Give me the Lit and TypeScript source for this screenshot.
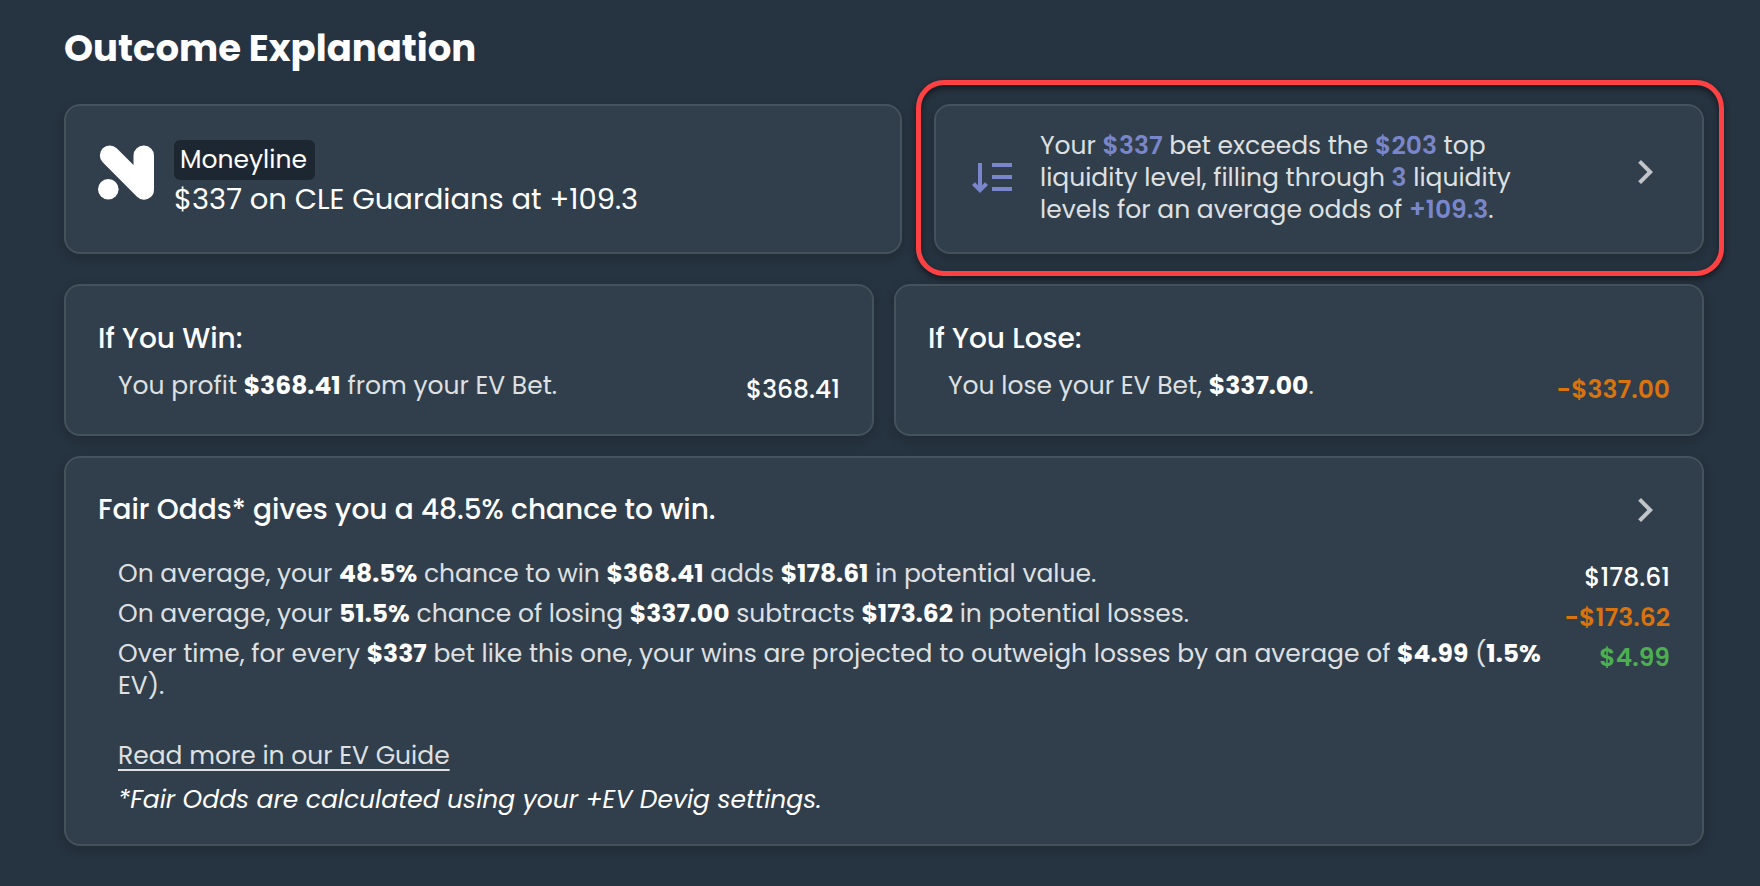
import { LitElement, html, css } from "lit";
import { customElement, property } from "lit/decorators.js";

const chevron = html`<svg class="chevron" viewBox="0 0 24 24" aria-hidden="true">
  <path d="M10 6 8.59 7.41 13.17 12l-4.58 4.59L10 18l6-6z" />
</svg>`;

const sortIcon = html`<svg class="sort" viewBox="0 0 40 30" aria-hidden="true">
  <path d="M6 0h4v22.2l3-3L16 22 8 30 0 22l3-2.800 3 3z" />
  <path d="M20 0h20v4H20zM20 12h20v4H20zM20 24h20v4H20z" />
</svg>`;

const logo = html`<svg class="logo" viewBox="0 0 56 56" role="img" aria-label="Novig">
  <path d="M46 1.500a10 10 0 0 1 10 10v34a10 10 0 0 1-17 7.200L4.700 18.300A9.900 9.900 0 0 1 18.700 4.300L35.500 21V11.500a10.200 10.200 0 0 1 10.500-10z" />
  <circle cx="10.300" cy="45.300" r="10.300" />
</svg>`;

@customElement("outcome-card")
export class OutcomeCard extends LitElement {
  static styles = css`
    :host {
      display: block;
      box-sizing: border-box;
      background: #313e4b;
      border: 2px solid #44525d;
      border-radius: 16px;
      box-shadow: 0 4px 12px rgba(0, 0, 0, 0.16);
    }
  `;
  render() {
    return html`<slot></slot>`;
  }
}

@customElement("value-row")
export class ValueRow extends LitElement {
  @property() amount = "";
  @property({ reflect: true }) tone = "plain";
  static styles = css`
    :host {
      display: flex;
      align-items: flex-start;
      gap: 24px;
      padding-left: 20px;
      color: #dee0e2;
    }
    .text {
      flex: 1;
      min-width: 0;
      line-height: 32px;
    }
    .amount {
      line-height: 40px;
      font-weight: 500;
      color: #fff;
      white-space: nowrap;
    }
    :host([tone="loss"]) .amount {
      color: #d9730d;
      font-weight: 600;
    }
    :host([tone="gain"]) .amount {
      color: #4caf50;
      font-weight: 600;
    }
  `;
  render() {
    return html`<div class="text"><slot></slot></div>
      <div class="amount">${this.amount}</div>`;
  }
}

@customElement("app-root")
export class AppRoot extends LitElement {
  static styles = css`
    :host {
      display: block;
      box-sizing: border-box;
      min-height: 100vh;
      padding: 24px 56px 40px 64px;
      background: #263340;
      color: #fff;
      font-family: Poppins, Inter, sans-serif;
      font-size: 25px;
      line-height: 32px;
    }
    h1,
    h2,
    p {
      margin: 0;
    }
    h1 {
      font-size: 37px;
      line-height: 48px;
      font-weight: 700;
    }
    h2 {
      font-size: 28px;
      line-height: 40px;
      font-weight: 500;
    }
    b {
      font-weight: 700;
      color: #fff;
    }
    .row {
      display: grid;
      grid-template-columns: 1fr 1fr;
      gap: 20px;
    }
    .top {
      grid-template-columns: 838fr 770fr;
      gap: 32px;
      margin: 32px 0 30px;
    }
    .bet {
      display: flex;
      align-items: center;
      gap: 20px;
      padding: 0 32px;
    }
    .logo {
      width: 56px;
      height: 56px;
      margin-bottom: 14px;
      fill: #fff;
    }
    .badge {
      display: inline-block;
      padding: 0 8px 0 6px;
      border-radius: 6px;
      background: #1d2731;
      line-height: 40px;
    }
    .pick {
      font-size: 29px;
      line-height: 38px;
    }
    .liquidity {
      position: relative;
      display: flex;
      align-items: center;
      padding: 24px 32px 26px 36px;
      color: #dee0e2;
    }
    .liquidity b {
      color: #7986cb;
      font-weight: 600;
    }
    .liquidity p {
      flex: 1;
      max-width: 520px;
      margin-left: 28px;
    }
    .highlight {
      position: absolute;
      inset: -26px -22px -24px -20px;
      border: 5px solid #ff4143;
      border-radius: 28px;
      box-shadow: 0 3px 6px rgba(0, 0, 0, 0.5), inset 0 3px 6px rgba(0, 0, 0, 0.5);
      pointer-events: none;
    }
    .sort {
      width: 40px;
      height: 30px;
      flex: none;
      fill: #7986cb;
    }
    button {
      display: block;
      flex: none;
      margin: 0 1px 0 auto;
      padding: 0;
      border: 0;
      background: none;
      cursor: pointer;
    }
    .liquidity button {
      margin-bottom: 12px;
    }
    .chevron {
      display: block;
      width: 48px;
      height: 48px;
      fill: #c1c5c9;
    }
    .result {
      padding: 33px 32px 24px;
    }
    .result h2 {
      margin-bottom: 11px;
    }
    .fair {
      margin-top: 20px;
      padding: 28px 32px;
    }
    .head {
      display: flex;
      align-items: center;
      margin-bottom: 24px;
    }
    .more {
      padding: 38px 0 0 20px;
    }
    a {
      color: #dee0e2;
      text-decoration-thickness: 2px;
      text-underline-offset: 5px;
    }
    .note {
      margin-top: 12px;
      font-style: italic;
    }
  `;

  render() {
    return html`
      <h1>Outcome Explanation</h1>
      <div class="row top">
        <outcome-card class="bet">
          ${logo}
          <div>
            <span class="badge">Moneyline</span>
            <p class="pick">$337 on CLE Guardians at +109.3</p>
          </div>
        </outcome-card>
        <outcome-card class="liquidity">
          ${sortIcon}
          <p>
            Your <b>$337</b> bet exceeds the <b>$203</b> top liquidity level, filling through
            <b>3</b> liquidity levels for an average odds of <b>+109.3</b>.
          </p>
          <button type="button" aria-label="View liquidity levels">${chevron}</button>
          <div class="highlight"></div>
        </outcome-card>
      </div>
      <div class="row">
        <outcome-card class="result">
          <h2>If You Win:</h2>
          <value-row amount="$368.41">You profit <b>$368.41</b> from your EV Bet.</value-row>
        </outcome-card>
        <outcome-card class="result">
          <h2>If You Lose:</h2>
          <value-row amount="-$337.00" tone="loss">You lose your EV Bet, <b>$337.00</b>.</value-row>
        </outcome-card>
      </div>
      <outcome-card class="fair">
        <div class="head">
          <h2>Fair Odds* gives you a 48.5% chance to win.</h2>
          <button type="button" aria-label="View fair odds">${chevron}</button>
        </div>
        <value-row amount="$178.61">On average, your <b>48.5%</b> chance to win <b>$368.41</b> adds <b>$178.61</b> in potential value.</value-row>
        <value-row amount="-$173.62" tone="loss">On average, your <b>51.5%</b> chance of losing <b>$337.00</b> subtracts <b>$173.62</b> in potential losses.</value-row>
        <value-row amount="$4.99" tone="gain">Over time, for every <b>$337</b> bet like this one, your wins are projected to outweigh losses by an average of <b>$4.99</b> (<b>1.5%</b> EV).</value-row>
        <div class="more">
          <a href="#ev-guide">Read more in our EV Guide</a>
          <p class="note">*Fair Odds are calculated using your +EV Devig settings.</p>
        </div>
      </outcome-card>
    `;
  }
}
